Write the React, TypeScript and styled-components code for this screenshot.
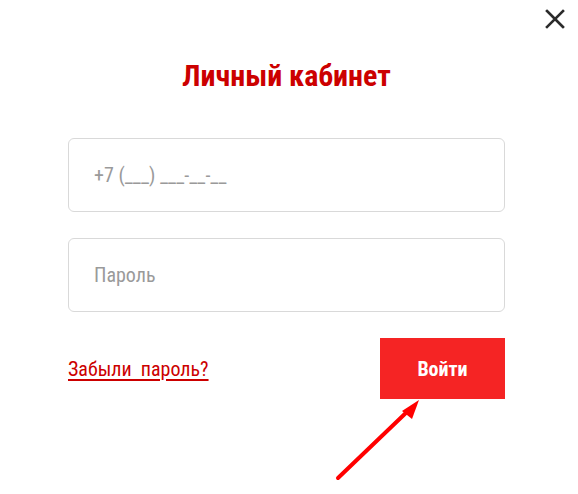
import React from "react";
import styled, { createGlobalStyle } from "styled-components";

const Global = createGlobalStyle`
  html, body { margin: 0; padding: 0; background: #fff; }
  body { font-family: "Roboto Condensed", Roboto, "Liberation Sans", sans-serif; }
  * { box-sizing: border-box; }
`;

const Modal = styled.div`
  position: relative;
  width: 578px;
  height: 494px;
  background: #fff;
  padding: 58px 73px 0 68px;
  display: flex;
  flex-direction: column;
`;

const Close = styled.button`
  position: absolute;
  top: 8px;
  right: 12px;
  width: 22px;
  height: 22px;
  padding: 0;
  border: none;
  background: transparent;
  cursor: pointer;
  display: flex;
  align-items: center;
  justify-content: center;
`;

const Title = styled.h2`
  margin: 0 0 44px;
  text-align: center;
  font-family: "Roboto Condensed", Roboto, sans-serif;
  font-weight: 700;
  font-size: 30px;
  line-height: 36px;
  color: #cc0000;
`;

const Fields = styled.div`
  display: flex;
  flex-direction: column;
  gap: 26px;
`;

const Input = styled.input`
  width: 100%;
  height: 74px;
  border: 1px solid #d9d9d9;
  border-radius: 6px;
  padding: 0 25px;
  font-family: "Roboto Condensed", Roboto, sans-serif;
  font-size: 20px;
  color: #333;
  outline: none;
  &::placeholder { color: #9a9a9a; }
`;

const Actions = styled.div`
  margin-top: 26px;
  display: flex;
  align-items: center;
  justify-content: space-between;
`;

const Forgot = styled.a`
  font-family: "Roboto Condensed", Roboto, sans-serif;
  font-size: 20px;
  color: #cc0000;
  text-decoration: underline;
  text-decoration-thickness: 2px;
  text-underline-offset: 3px;
  white-space: pre;
  cursor: pointer;
`;

const Submit = styled.button`
  width: 125px;
  height: 61px;
  border: none;
  background: #f52424;
  color: #fff;
  font-family: "Roboto Condensed", Roboto, sans-serif;
  font-weight: 700;
  font-size: 20px;
  cursor: pointer;
`;

const Arrow = styled.svg`
  position: absolute;
  left: 330px;
  top: 392px;
  pointer-events: none;
`;

export default function App() {
  return (
    <>
      <Global />
      <Modal>
        <Close aria-label="Закрыть">
          <svg width="20" height="20" viewBox="0 0 20 20">
            <path d="M2 2 L18 18 M18 2 L2 18" stroke="#2b2b2b" strokeWidth="2.6" strokeLinecap="square" />
          </svg>
        </Close>
        <Title>Личный кабинет</Title>
        <Fields>
          <Input type="tel" placeholder="+7 (___) ___-__-__" />
          <Input type="password" placeholder="Пароль" />
        </Fields>
        <Actions>
          <Forgot>{"Забыли  пароль?"}</Forgot>
          <Submit>Войти</Submit>
        </Actions>
        <Arrow width="100" height="95" viewBox="0 0 100 95">
          <line x1="8" y1="86" x2="80" y2="17" stroke="#ff0000" strokeWidth="4" strokeLinecap="round" />
          <polygon points="89,8 72,19 82,27" fill="#ff0000" />
        </Arrow>
      </Modal>
    </>
  );
}
